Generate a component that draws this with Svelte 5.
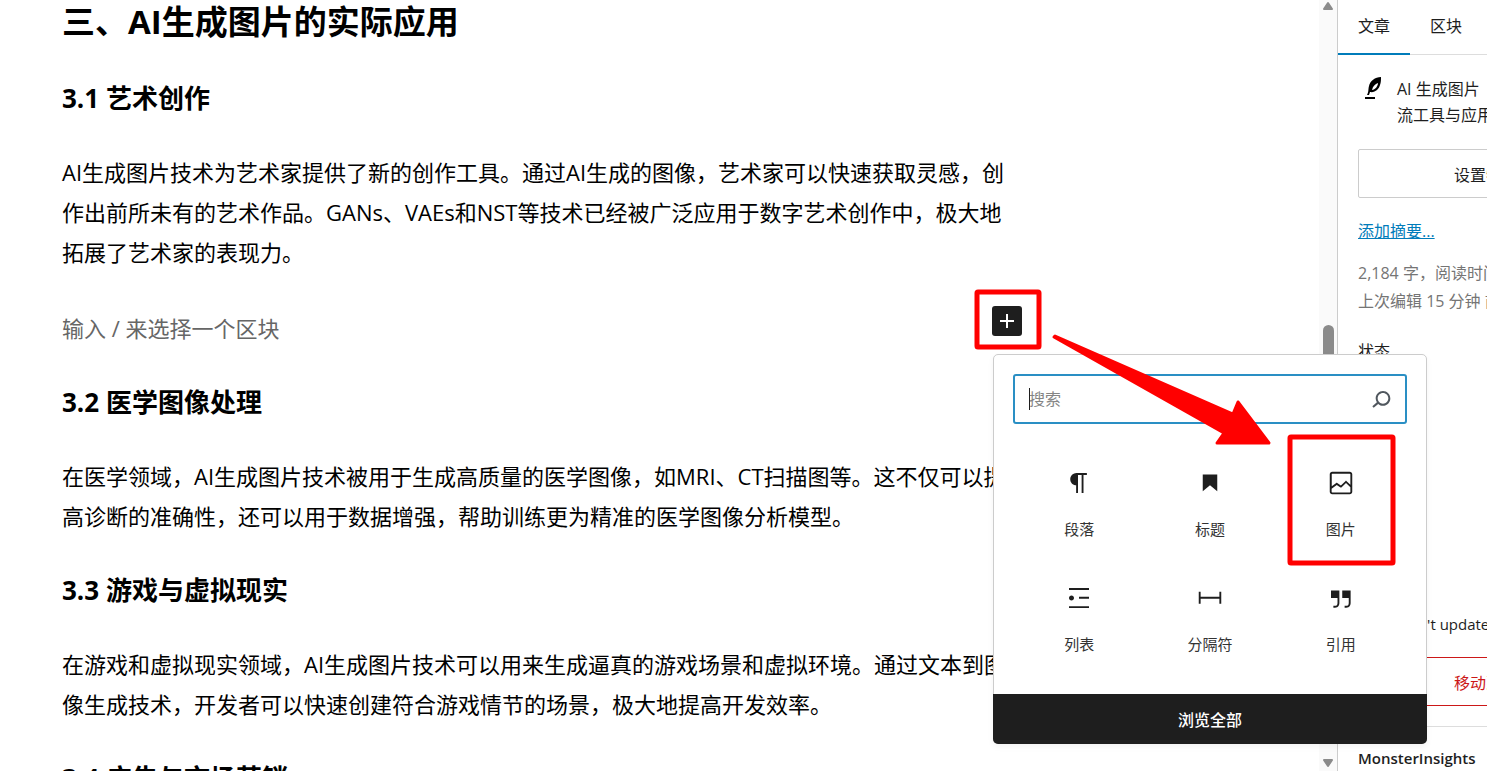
<script>
	let query = "";
	let activeTab = "post";
	let keepDate = false;

	const tabs = [
		{ id: "post", label: "文章" },
		{ id: "block", label: "区块" },
	];

	// Blocks offered by the quick inserter
	const blocks = [
		{
			name: "段落",
			icon: "M18.3 4H9.9v-.1l-.9.2c-2.3.4-4 2.4-4 4.8s1.7 4.4 4 4.8l.7.1V20h1.5V5.5h2.9V20h1.5V5.5h2.7V4z",
		},
		{
			name: "标题",
			icon: "M6.2 5.2v13.4l5.8-4.8 5.8 4.8V5.2z",
		},
		{
			name: "图片",
			icon: "M19 3H5c-1.1 0-2 .9-2 2v14c0 1.1.9 2 2 2h14c1.1 0 2-.9 2-2V5c0-1.1-.9-2-2-2zM5 4.5h14c.3 0 .5.2.5.5v8.4l-3-2.9c-.3-.3-.8-.3-1 0L11.9 14 9 12c-.3-.2-.6-.2-.8 0l-3.6 2.6V5c-.1-.3.1-.5.4-.5zm14 15H5c-.3 0-.5-.2-.5-.5v-2.4l4.1-3 3 1.9c.3.2.7.2.9-.1L16 12l3.5 3.4V19c0 .3-.2.5-.5.5z",
		},
		{
			name: "列表",
			icon: "M4 4v1.5h16V4H4zm8 8.5h8V11h-8v1.5zM4 20h16v-1.5H4V20zm4-8c0-1.1-.9-2-2-2s-2 .9-2 2 .9 2 2 2 2-.9 2-2z",
		},
		{
			name: "分隔符",
			icon: "M4.5 12.5v4H3V7h1.5v3.987h15V7H21v9.5h-1.5v-4h-15z",
		},
		{
			name: "引用",
			icon: "M13 6v6h5.2v4c0 .8-.2 1.4-.5 1.7-.6.6-1.6.6-2.5.5h-.3v1.5h.5c1 0 2.3-.1 3.3-1 .6-.6 1-1.6 1-2.8V6H13zm-9 6h5.2v4c0 .8-.2 1.4-.5 1.7-.6.6-1.6.6-2.5.5h-.3v1.5h.5c1 0 2.3-.1 3.3-1 .6-.6 1-1.6 1-2.8V6H4v6z",
		},
	];
</script>

<div class="editor" lang="zh-CN">
	<main class="canvas">
		<h2>三、AI生成图片的实际应用</h2>

		<h3>3.1 艺术创作</h3>
		<p>
			AI生成图片技术为艺术家提供了新的创作工具。通过AI生成的图像，艺术家可以快速获取灵感，创作出前所未有的艺术作品。GANs、VAEs和NST等技术已经被广泛应用于数字艺术创作中，极大地拓展了艺术家的表现力。
		</p>

		<div class="emptyBlock">
			<p class="prompt">输入 / 来选择一个区块</p>

			<div class="inserter">
				<button class="toggle" type="button" aria-label="添加区块">
					<svg viewBox="0 0 30 30" width="30" height="30">
						<path d="M15 8v14M8 15h14" stroke="#fff" stroke-width="2" />
					</svg>
				</button>

				<div class="popover">
					<div class="search">
						<input
							type="text"
							aria-label="搜索"
							placeholder="搜索"
							bind:value={query}
						/>
						<span class="caret"></span>
						<svg viewBox="0 0 24 24" width="32" height="32">
							<path
								d="M13.5 6C10.5 6 8 8.5 8 11.5c0 1.1.3 2.1.9 3l-3.4 3 1 1.1 3.4-2.9c1 .9 2.2 1.4 3.6 1.4 3 0 5.5-2.5 5.5-5.5C19 8.5 16.5 6 13.5 6zm0 9.5c-2.2 0-4-1.8-4-4s1.8-4 4-4 4 1.8 4 4-1.8 4-4 4z"
							/>
						</svg>
					</div>

					<div class="blocks">
						{#each blocks as block}
							<button class="block" type="button">
								<svg viewBox="0 0 24 24" width="30" height="30">
									<path d={block.icon} />
								</svg>
								{block.name}
							</button>
						{/each}
					</div>

					<button class="browse" type="button">浏览全部</button>
				</div>

				<!-- Red marks: plus button -> image block -->
				<svg class="marks" viewBox="0 0 440 300" width="440" height="300">
					<rect x="5" y="6" width="62" height="55" rx="1" />
					<rect x="318" y="151" width="103" height="126" rx="1" />
					<path
						class="arrow"
						d="M83 50 L261 128 L266 116 L297 157 L245 157 L252 147 L82 51 Z"
					/>
				</svg>
			</div>
		</div>

		<h3>3.2 医学图像处理</h3>
		<p>
			在医学领域，AI生成图片技术被用于生成高质量的医学图像，如MRI、CT扫描图等。这不仅可以提高诊断的准确性，还可以用于数据增强，帮助训练更为精准的医学图像分析模型。
		</p>

		<h3>3.3 游戏与虚拟现实</h3>
		<p>
			在游戏和虚拟现实领域，AI生成图片技术可以用来生成逼真的游戏场景和虚拟环境。通过文本到图像生成技术，开发者可以快速创建符合游戏情节的场景，极大地提高开发效率。
		</p>

		<h3>3.4 广告与市场营销</h3>
	</main>

	<div class="scrollbar">
		<svg viewBox="0 0 12 10" width="12" height="10">
			<path d="M6 2 L10 8 H2 Z" />
		</svg>
		<span class="thumb"></span>
		<svg viewBox="0 0 12 10" width="12" height="10">
			<path d="M6 8 L10 2 H2 Z" />
		</svg>
	</div>

	<aside class="sidebar">
		<div class="tabs">
			{#each tabs as tab}
				<button
					type="button"
					class:active={activeTab === tab.id}
					on:click={() => (activeTab = tab.id)}>{tab.label}</button
				>
			{/each}
		</div>

		<div class="panel">
			<div class="summary">
				<svg viewBox="0 0 18 24" width="18" height="24">
					<path
						d="M16 1C10 1 5 5 4 10C3 14 4 15 2 19H4L5 16C10 17 14 13 15 9C16 6 16 4 16 1Z"
					/>
					<path class="slit" d="M13 7C10 8 8 10 7 14C10 14 13 10 13 7Z" />
					<path d="M0 21H10V23H0Z" />
				</svg>
				<strong>AI 生成图片<br />流工具与应用</strong>
			</div>

			<button class="featured" type="button">设置特色图片</button>
			<a class="excerpt" href="#excerpt">添加摘要...</a>
			<p class="meta">2,184 字，阅读时间<br />上次编辑 15 分钟 前</p>
			<div class="status">状态</div>

			<label class="keepDate">
				<input type="checkbox" bind:checked={keepDate} />
				Don't update
			</label>
			<button class="trash" type="button">移动到回收站</button>
		</div>

		<div class="plugin">MonsterInsights</div>
	</aside>
</div>

<style>
	:global(body) {
		background: #fff;
	}

	.editor {
		display: flex;
		height: 100vh;
		overflow: hidden;
		font-family: "Open Sans", "Noto Sans CJK SC", sans-serif;
		font-size: 16px;
		color: #1e1e1e;
	}

	button,
	input {
		font: inherit;
		color: inherit;
	}

	button {
		padding: 0;
		border: none;
		background: none;
		cursor: pointer;
	}

	svg {
		display: block;
		flex: none;
	}

	.canvas {
		flex: 1;
		min-width: 0;
		padding-left: 62px;
		color: #000;
	}

	.canvas h2,
	.canvas h3,
	.canvas p {
		max-width: 948px;
		margin: 0 0 36px;
	}

	.canvas h2 {
		font-size: 33px;
		line-height: 44px;
	}

	.canvas h3 {
		margin-bottom: 35px;
		font-size: 26px;
		line-height: 37px;
	}

	.canvas p {
		font-size: 22px;
		line-height: 40px;
	}

	.emptyBlock {
		position: relative;
		max-width: 960px;
	}

	.canvas .prompt {
		color: #666;
	}

	/* Quick inserter */
	.inserter {
		position: absolute;
		top: -2px;
		right: 0;
		z-index: 10;
		color: #1e1e1e;
	}

	.toggle {
		display: block;
		border-radius: 3px;
		background: #1e1e1e;
	}

	.popover {
		position: absolute;
		top: 48px;
		left: 1px;
		width: 434px;
		box-sizing: border-box;
		border: 1px solid #ccc;
		border-radius: 5px;
		background: #fff;
		box-shadow: 0 3px 6px rgba(0, 0, 0, 0.05);
	}

	.search {
		position: relative;
		display: flex;
		align-items: center;
		height: 46px;
		margin: 19px 19px 25px;
		padding-right: 8px;
		border: 2px solid #2a8fc4;
		border-radius: 3px;
	}

	.search input {
		flex: 1;
		min-width: 0;
		padding: 0 14px;
		border: none;
		outline: none;
		background: none;
	}

	.search input::placeholder {
		color: #858585;
		opacity: 1;
	}

	.search svg {
		fill: #50575e;
	}

	.caret {
		position: absolute;
		left: 14px;
		width: 1px;
		height: 22px;
		background: #1e1e1e;
	}

	.blocks {
		display: grid;
		grid-template-columns: repeat(3, 1fr);
		margin: 0 20px 15px;
	}

	.block {
		display: flex;
		flex-direction: column;
		align-items: center;
		gap: 21px;
		height: 115px;
		box-sizing: border-box;
		padding-top: 19px;
		font-size: 15px;
		line-height: 20px;
		color: #333;
	}

	.block svg {
		fill: #1e1e1e;
	}

	.browse {
		display: block;
		width: calc(100% + 2px);
		height: 50px;
		margin: 0 -1px -1px;
		border-radius: 0 0 5px 5px;
		background: #1e1e1e;
		color: #fff;
		font-weight: 500;
	}

	.marks {
		position: absolute;
		top: -20px;
		left: -20px;
		pointer-events: none;
	}

	.marks rect {
		fill: none;
		stroke: #f00;
		stroke-width: 5;
	}

	.marks .arrow {
		fill: #f00;
		stroke: #f00;
		stroke-width: 3;
		stroke-linejoin: round;
	}

	/* Scrollbar */
	.scrollbar {
		display: flex;
		flex-direction: column;
		align-items: center;
		flex: 0 0 18px;
		padding: 1px 0 3px;
		box-sizing: border-box;
		background: #fafafa;
	}

	.scrollbar path {
		fill: #8b8b8b;
		stroke: #8b8b8b;
		stroke-width: 2;
		stroke-linejoin: round;
	}

	.thumb {
		width: 11px;
		height: 60px;
		margin: 314px 0 auto;
		border-radius: 6px;
		background: #8b8b8b;
	}

	/* Settings sidebar */
	.sidebar {
		flex: 0 0 149px;
		overflow: hidden;
		border-left: 1px solid #ccc;
	}

	.tabs {
		display: flex;
		border-bottom: 1px solid #ddd;
	}

	.tabs button {
		height: 55px;
		padding: 0 20px 4px;
		margin-bottom: -1px;
		border-bottom: 2px solid transparent;
	}

	.tabs button.active {
		border-bottom-color: #007cba;
	}

	.panel {
		display: flex;
		flex-direction: column;
		align-items: flex-start;
		width: 288px;
		padding: 21px 20px 20px;
		border-bottom: 1px solid #ddd;
	}

	.summary {
		display: flex;
		gap: 14px;
		padding-left: 7px;
		line-height: 26px;
		white-space: nowrap;
	}

	.summary strong {
		font-weight: 400;
	}

	.summary .slit {
		fill: #fff;
	}

	.featured,
	.trash {
		width: 100%;
		height: 49px;
		border: 1px solid #ccc;
		border-radius: 2px;
	}

	.featured {
		margin-top: 21px;
	}

	.excerpt {
		margin-top: 20px;
		line-height: 26px;
		color: #007cba;
	}

	.meta {
		margin: 15px 0 0;
		line-height: 28px;
		white-space: nowrap;
		color: #757575;
	}

	.status {
		margin-top: 22px;
		line-height: 28px;
	}

	.keepDate {
		display: flex;
		align-items: center;
		gap: 16px;
		height: 26px;
		margin-top: 246px;
		font-size: 15px;
		white-space: nowrap;
	}

	.keepDate input {
		width: 24px;
		height: 24px;
		margin: 0;
	}

	.trash {
		margin-top: 20px;
		border-color: #cc1818;
		color: #cc1818;
	}

	.plugin {
		padding: 17px 20px;
		font-size: 15px;
		font-weight: 600;
		line-height: 28px;
	}
</style>
